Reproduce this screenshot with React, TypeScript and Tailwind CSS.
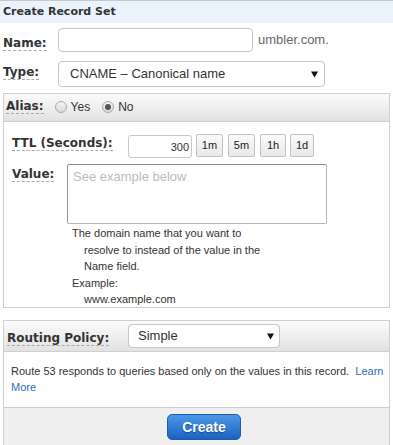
import React from "react";

const label =
  "block w-fit font-['DejaVu_Sans',Verdana,sans-serif] font-bold text-[12px] leading-[14px] text-[#333] border-b border-dashed border-[#aaa]";

function Arrow() {
  return (
    <svg width="7" height="7" viewBox="0 0 7 7">
      <path d="M0 0.5h7L3.5 6.5z" fill="#111" />
    </svg>
  );
}

function Radio({ checked }: { checked?: boolean }) {
  return (
    <span className="w-[12px] h-[12px] rounded-full border border-[#a9a9a9] bg-linear-to-b from-[#f6f6f6] to-[#d9d9d9] flex items-center justify-center">
      {checked && <span className="w-[6px] h-[6px] rounded-full bg-[#555]" />}
    </span>
  );
}

const ttlButtons = [
  { text: "1m", cls: "w-[27px] ml-[4px]" },
  { text: "5m", cls: "w-[27px] ml-[5px]" },
  { text: "1h", cls: "w-[26px] ml-[5px]" },
  { text: "1d", cls: "w-[24px] ml-[4px]" },
];

export default function App() {
  return (
    <div className="w-[393px] h-[445px] overflow-hidden bg-white font-['Liberation_Sans',Arial,sans-serif] text-[#333]">
      <div className="border-t border-[#c8c8c8] bg-[#eaf2fc] h-[23px] pl-[3px] flex items-center font-['DejaVu_Sans',Verdana,sans-serif] font-bold text-[11px] text-[#333]">
        Create Record Set
      </div>

      {/* name */}
      <div className="flex items-end mt-[5px] h-[24px] pl-[3px]">
        <div className="flex w-[55px] mb-[1px]">
          <span className={label}>Name:</span>
        </div>
        <div className="w-[195px] h-[24px] border border-[#c6c6c6] rounded-[4px] bg-white" />
        <span className="ml-[5px] self-center text-[13px] leading-[16px] text-[#666]">umbler.com.</span>
      </div>

      {/* type */}
      <div className="flex items-start mt-[9px] pl-[3px]">
        <div className="flex w-[55px] mt-[4px]">
          <span className={label}>Type:</span>
        </div>
        <div className="w-[267px] h-[26px] border border-[#c6c6c6] rounded-[4px] flex items-center justify-between pl-[11px] pr-[6px] text-[13px] text-[#333]">
          <span>CNAME – Canonical name</span>
          <Arrow />
        </div>
      </div>

      {/* alias box */}
      <div className="ml-[3px] mt-[6px] w-[387px] border border-[#cfcfcf]">
        <div className="h-[28px] border-b border-[#cfcfcf] bg-linear-to-b from-[#fbfbfb] to-[#e2e2e2] flex items-center pl-[2px]">
          <div className="flex -mt-[2px]">
            <span className={label}>Alias:</span>
          </div>
          <div className="flex items-center ml-[11px] -mt-[2px]">
            <Radio />
            <span className="ml-[4px] text-[12px] leading-[14px]">Yes</span>
            <div className="flex ml-[12px]">
              <Radio checked />
            </div>
            <span className="ml-[4px] text-[12px] leading-[14px]">No</span>
          </div>
        </div>

        <div className="h-[185px] pt-[13px]">
          <div className="flex items-start pl-[8px]">
            <div className="flex w-[116px] mt-[1px]">
              <span className={label}>TTL (Seconds):</span>
            </div>
            <div className="w-[64px] h-[23px] border border-[#c6c6c6] rounded-[3px] text-right pr-[2px] pt-[5px] text-[11px] leading-[13px]">
              300
            </div>
            {ttlButtons.map((b) => (
              <div
                key={b.text}
                className={`${b.cls} -mt-[1px] h-[23px] border border-[#c2c2c2] rounded-[2px] bg-linear-to-b from-[#fafafa] to-[#e9e9e9] flex items-center justify-center text-[11px] leading-[13px] text-[#222]`}
              >
                {b.text}
              </div>
            ))}
          </div>

          <div className="flex items-start pl-[8px] mt-[6px]">
            <div className="flex w-[55px] mt-[3px]">
              <span className={label}>Value:</span>
            </div>
            <div className="w-[260px] h-[60px] border border-[#b5b5b5] border-t-[#888] border-l-[#999] rounded-[2px] pl-[5px] pt-[4px] text-[13px] leading-[16px] text-[#bbb]">
              See example below
            </div>
          </div>

          <div className="ml-[68px] mt-[1px] text-[11px] leading-[16.5px] text-[#333]">
            <div>The domain name that you want to</div>
            <div className="pl-[12px]">resolve to instead of the value in the</div>
            <div className="pl-[12px]">Name field.</div>
            <div>Example:</div>
            <div className="pl-[12px]">www.example.com</div>
          </div>
        </div>
      </div>

      {/* routing box */}
      <div className="ml-[3px] mt-[12px] w-[387px] border border-[#cfcfcf] h-[140px]">
        <div className="h-[31px] border-b border-[#cfcfcf] bg-linear-to-b from-[#fbfbfb] to-[#e2e2e2] flex items-center pl-[3px]">
          <div className="flex w-[121px] mt-[5px]">
            <span className={label}>Routing Policy:</span>
          </div>
          <div className="w-[152px] h-[24px] border border-[#c6c6c6] rounded-[4px] bg-white flex items-center justify-between pl-[9px] pr-[5px] text-[13px] text-[#333]">
            <span>Simple</span>
            <Arrow />
          </div>
        </div>

        <div className="h-[56px] border-b border-[#cfcfcf] pt-[11px] pl-[7px] pr-[2px] text-[11px] leading-[16px] text-[#333]">
          <span>Route 53 responds to queries based only on the values in this record.{"\u00a0 "}</span>
          <span className="text-[#1f6ebd]">Learn</span>{" "}
          <span className="text-[#1f6ebd]">More</span>
        </div>

        <div className="bg-[#efefef] h-[60px] pt-[6px] pl-[163px]">
          <button className="w-[74px] h-[26px] rounded-[5px] border border-[#1b5cae] bg-linear-to-b from-[#4b98e8] to-[#1b62c0] text-white font-bold text-[14px] [text-shadow:0_1px_1px_rgba(0,0,0,0.35)]">
            Create
          </button>
        </div>
      </div>
    </div>
  );
}
